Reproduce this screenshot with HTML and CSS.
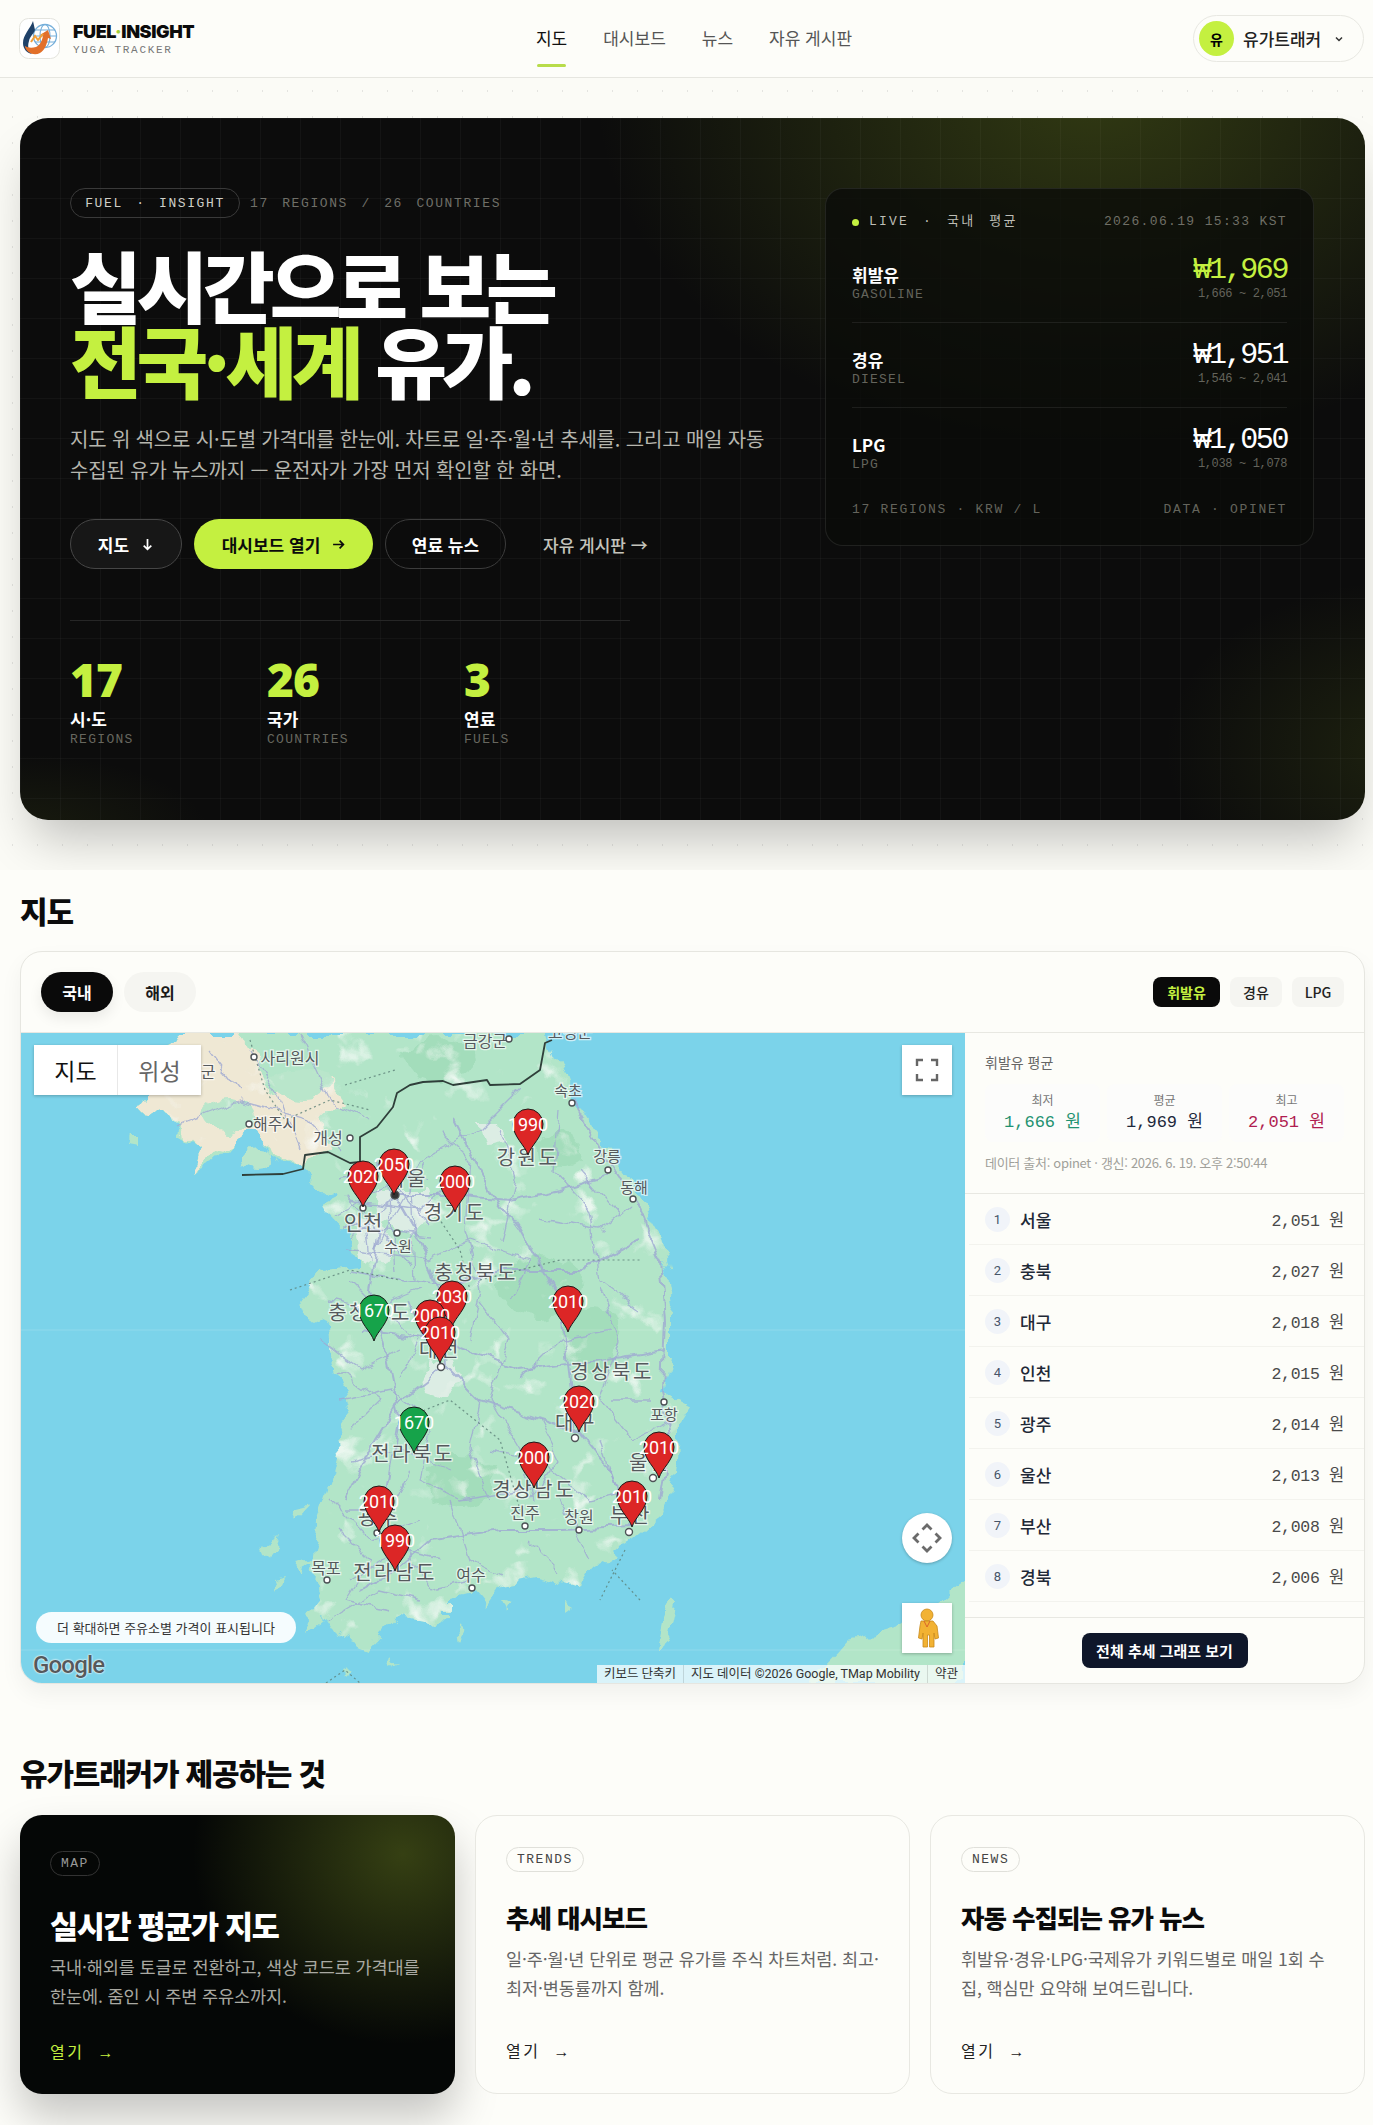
FILE: index.html
```html
<!DOCTYPE html>
<html lang="ko">
<head>
    <meta charset="UTF-8">
    <meta name="viewport" content="width=device-width, initial-scale=1.0">
    <title>FUEL·INSIGHT 유가트래커</title>
    <link rel="stylesheet" href="styles.css">
</head>
<body>
    <header class="topbar">
        <a class="brand" href="#">
            <svg class="brand-logo" viewBox="0 0 41 41" width="41" height="41">
                <rect x="0.5" y="0.5" width="40" height="40" rx="9" fill="#fff" stroke="#e4e4de"/>
                <circle cx="26" cy="18" r="11.5" fill="none" stroke="#74aeda" stroke-width="1.3"/>
                <ellipse cx="26" cy="18" rx="5" ry="11.5" fill="none" stroke="#74aeda" stroke-width="1.1"/>
                <path d="M14.5 18h23M16 12h20M16 24h20" fill="none" stroke="#74aeda" stroke-width="1.1"/>
                <path d="M14 3C11 11 4 17 4 25c0 6 4 10 9 11-3-3-5-7-3-13 1-5 4-6 6-11z" fill="#1f4168"/>
                <path d="M6 29c2 6 9 9 15 6 5-3 7-9 8-15l3 1-3-9-8 5 3 1c-1 5-3 9-7 11-4 1-8 1-11-1z" fill="#e2702a"/>
                <path d="M12 24l4-6 3 4 5-6" fill="none" stroke="#f2a13a" stroke-width="2"/>
            </svg>
            <span class="brand-text">
                <strong class="brand-name">FUEL<i class="brand-dot">·</i>INSIGHT</strong>
                <span class="brand-sub">YUGA TRACKER</span>
            </span>
        </a>
        <nav class="nav">
            <a class="nav-item active" href="#">지도</a>
            <a class="nav-item" href="#">대시보드</a>
            <a class="nav-item" href="#">뉴스</a>
            <a class="nav-item" href="#">자유 게시판</a>
        </nav>
        <button class="user-chip">
            <span class="avatar">유</span>
            <span class="user-name">유가트래커</span>
            <svg class="chevron" viewBox="0 0 10 10" width="10" height="10"><path d="M2 3.5l3 3 3-3" fill="none" stroke="#333" stroke-width="1.5"/></svg>
        </button>
    </header>

    <section class="hero-wrap">
        <div class="hero">
            <div class="hero-left">
                <div class="eyebrow">
                    <span class="eyebrow-pill">FUEL · INSIGHT</span>
                    <span class="eyebrow-note">17 REGIONS / 26 COUNTRIES</span>
                </div>
                <h1 class="hero-title">실시간으로 보는<br><em>전국·세계</em> 유가.</h1>
                <p class="hero-desc">지도 위 색으로 시·도별 가격대를 한눈에. 차트로 일·주·월·년 추세를. 그리고 매일 자동<br>수집된 유가 뉴스까지 — 운전자가 가장 먼저 확인할 한 화면.</p>
                <div class="hero-actions">
                    <a class="btn btn-dark" href="#">지도
                        <svg viewBox="0 0 12 12" width="13" height="13"><path d="M6 1v9.5M2.5 7L6 10.5 9.5 7" fill="none" stroke="currentColor" stroke-width="1.6"/></svg>
                    </a>
                    <a class="btn btn-lime" href="#">대시보드 열기
                        <svg viewBox="0 0 12 12" width="13" height="13"><path d="M1 6h9.5M7 2.5L10.5 6 7 9.5" fill="none" stroke="currentColor" stroke-width="1.6"/></svg>
                    </a>
                    <a class="btn btn-line" href="#">연료 뉴스</a>
                    <a class="btn-text" href="#">자유 게시판 →</a>
                </div>
                <div class="hero-stats">
                    <div class="stat"><b>17</b><span>시·도</span><small>REGIONS</small></div>
                    <div class="stat"><b>26</b><span>국가</span><small>COUNTRIES</small></div>
                    <div class="stat"><b>3</b><span>연료</span><small>FUELS</small></div>
                </div>
            </div>
            <aside class="live">
                <div class="live-head">
                    <span class="live-tag"><i class="live-dot"></i>LIVE · 국내 평균</span>
                    <span class="live-date">2026.06.19 15:33 KST</span>
                </div>
                <div class="live-row">
                    <div class="live-name"><b>휘발유</b><small>GASOLINE</small></div>
                    <div class="live-price lime"><b>₩1,969</b><small>1,666 ~ 2,051</small></div>
                </div>
                <div class="live-row">
                    <div class="live-name"><b>경유</b><small>DIESEL</small></div>
                    <div class="live-price"><b>₩1,951</b><small>1,546 ~ 2,041</small></div>
                </div>
                <div class="live-row">
                    <div class="live-name"><b>LPG</b><small>LPG</small></div>
                    <div class="live-price"><b>₩1,050</b><small>1,038 ~ 1,078</small></div>
                </div>
                <div class="live-foot"><span>17 REGIONS · KRW / L</span><span>DATA · OPINET</span></div>
            </aside>
        </div>
    </section>

    <section class="map-section">
        <h2 class="section-title">지도</h2>
        <div class="map-card">
            <div class="map-toolbar">
                <div class="tabs">
                    <button class="tab on">국내</button>
                    <button class="tab">해외</button>
                </div>
                <div class="fuels">
                    <button class="fuel on">휘발유</button>
                    <button class="fuel">경유</button>
                    <button class="fuel">LPG</button>
                </div>
            </div>
            <div class="map-body">
                <div class="map">
                    <svg class="map-svg" viewBox="21 1033 944 650" width="944" height="650">
                        <defs>
                            <path id="pin" d="M0 0C-3-10-15-18-15-31A15 15 0 1 1 15-31C15-18 3-10 0 0Z"/>
                            <clipPath id="landclip"><path d="M180 1033L165 1060 150 1090 135 1110 160 1113 180 1135 200 1150 193 1170 215 1160 233 1140 250 1127 262 1145 272 1155 300 1167 317 1183 333 1195 327 1207 330 1215 347 1233 350 1247 363 1257 363 1267 337 1270 320 1272 300 1300 307 1317 327 1327 330 1357 343 1390 350 1417 337 1437 340 1453 333 1483 321 1517 312 1560 321 1603 304 1623 299 1640 326 1617 339 1637 371 1650 402 1617 429 1623 446 1620 446 1597 473 1590 487 1607 504 1583 536 1577 558 1583 580 1590 594 1567 625 1547 661 1517 674 1483 677 1463 680 1443 680 1423 690 1407 663 1393 670 1360 670 1317 673 1300 660 1233 647 1210 627 1176 607 1146 590 1126 573 1100 560 1066 550 1040 548 1033Z"/></clipPath>
                            <filter id="mottle" x="0" y="0" width="100%" height="100%">
                                <feTurbulence type="fractalNoise" baseFrequency="0.03" numOctaves="3" seed="7"/>
                                <feColorMatrix values="0 0 0 0 0.95 0 0 0 0 0.97 0 0 0 0 0.95 5 0 0 0 -3.1"/>
                            </filter>
                            <filter id="rough" filterUnits="userSpaceOnUse" x="21" y="1033" width="944" height="650">
                                <feTurbulence type="fractalNoise" baseFrequency="0.045" numOctaves="3" seed="3" result="n"/>
                                <feDisplacementMap in="SourceGraphic" in2="n" scale="22" xChannelSelector="R" yChannelSelector="G"/>
                            </filter>
                            <filter id="wiggle" filterUnits="userSpaceOnUse" x="21" y="1033" width="944" height="650">
                                <feTurbulence type="fractalNoise" baseFrequency="0.06" numOctaves="2" seed="9" result="n"/>
                                <feDisplacementMap in="SourceGraphic" in2="n" scale="12" xChannelSelector="R" yChannelSelector="G"/>
                            </filter>
                        </defs>
                        <rect x="21" y="1033" width="944" height="650" fill="#7bd3ea"/>
                        <!-- land -->
                        <g filter="url(#rough)">
                            <path class="land" d="M180 1033L165 1060 150 1090 135 1110 160 1113 180 1135 200 1150 193 1170 215 1160 233 1140 250 1127 262 1145 272 1155 300 1167 317 1183 333 1195 327 1207 330 1215 347 1233 350 1247 363 1257 363 1267 337 1270 320 1272 300 1300 307 1317 327 1327 330 1357 343 1390 350 1417 337 1437 340 1453 333 1483 321 1517 312 1560 321 1603 304 1623 299 1640 326 1617 339 1637 371 1650 402 1617 429 1623 446 1620 446 1597 473 1590 487 1607 504 1583 536 1577 558 1583 580 1590 594 1567 625 1547 661 1517 674 1483 677 1463 680 1443 680 1423 690 1407 663 1393 670 1360 670 1317 673 1300 660 1233 647 1210 627 1176 607 1146 590 1126 573 1100 560 1066 550 1040 548 1033Z"/>
                            <path class="land" d="M965 1578L940 1600 905 1625 850 1640 810 1683 965 1683ZM656 1650L662 1620 672 1597 678 1602 672 1630 662 1650ZM310 1505L296 1520 292 1510ZM286 1575L278 1590 274 1578ZM276 1540L268 1562 262 1548ZM395 1655L400 1662 392 1666ZM345 1668L352 1672 346 1678ZM130 1135L140 1135 140 1145 128 1143ZM320 1560L300 1575 296 1565ZM500 1600L512 1604 504 1616ZM560 1600L570 1606 560 1614ZM455 1625L466 1630 458 1645Z"/>
                            <path class="beige" d="M180 1033L150 1090 135 1110 160 1113 200 1150 193 1170 233 1140 262 1145 300 1167 330 1150 322 1120 345 1100 330 1080 270 1095 255 1060 240 1033Z"/>
                            <ellipse class="green2" cx="228" cy="1115" rx="26" ry="16"/>
                            <ellipse class="green2" cx="300" cy="1085" rx="30" ry="14"/>
                            <ellipse class="green2" cx="258" cy="1160" rx="16" ry="10"/>
                            <ellipse class="green3" cx="440" cy="1060" rx="36" ry="22"/>
                            <ellipse class="green3" cx="540" cy="1285" rx="42" ry="30"/>
                            <ellipse class="green3" cx="560" cy="1150" rx="22" ry="18"/>
                            <ellipse class="green3" cx="460" cy="1480" rx="36" ry="26"/>
                            <ellipse class="green3" cx="590" cy="1340" rx="30" ry="34"/>
                            <rect x="21" y="1033" width="944" height="650" filter="url(#mottle)" clip-path="url(#landclip)" opacity="0.8"/>
                            <path class="pale" d="M352 1210l24 6 18 28-12 18-20-6-6-26zM430 1358l22 4 8 18-12 16-18-6-6-18zM376 1190l50 0 8 26-20 18-34-12zM477 1125l28 0 4 20-26 4z"/>
                        </g>
                        <!-- roads -->
                        <g filter="url(#wiggle)">
                            <g class="roads thick">
                                <path d="M394 1195L420 1240 440 1300 445 1365 480 1400 540 1420 579 1432 610 1470 632 1527"/>
                                <path d="M380 1230L370 1290 385 1350 400 1420 385 1500 379 1532 395 1571"/>
                                <path d="M394 1195L450 1195 510 1200 560 1190 607 1176"/>
                                <path d="M573 1100L600 1150 635 1200 660 1260 665 1320 662 1390 670 1440 660 1500"/>
                                <path d="M455 1120L490 1190 520 1230 560 1300 570 1380 575 1432"/>
                                <path d="M632 1527L560 1530 500 1530 430 1540 395 1571 360 1590"/>
                                <path d="M440 1290L500 1270 580 1270 640 1240"/>
                                <path d="M445 1365L400 1400 370 1450 345 1500"/>
                                <path d="M360 1330L440 1340 520 1370 600 1360 665 1350"/>
                            </g>
                            <g class="roads">
                                <path d="M340 1180L380 1170 430 1180M350 1200L420 1210 440 1190M345 1225L430 1235M360 1170L370 1260M385 1150L395 1270M410 1160L415 1280M345 1250L430 1260 470 1240M350 1270L440 1285M335 1215L400 1180 440 1150M372 1160L430 1225M345 1195L410 1265M425 1165L375 1250M350 1240L400 1190"/>
                                <path d="M440 1130L470 1160 465 1230 480 1290 470 1340M500 1130L515 1180 500 1240M560 1110L555 1170 590 1210 600 1280 640 1310M520 1090L480 1130 440 1150M540 1220L600 1230 630 1205M470 1240L530 1260 510 1300M580 1170L620 1215"/>
                                <path d="M330 1300L370 1310 420 1290M320 1340L360 1370 400 1350M340 1400L390 1390 430 1420 420 1480 460 1500 530 1490M350 1460L400 1450 450 1470M345 1510L390 1510 410 1470M350 1280L390 1320 420 1340 400 1380M340 1370L380 1400 350 1430M410 1300L430 1350"/>
                                <path d="M480 1300L510 1340 490 1400 520 1450 534 1500M600 1290L620 1340 600 1400 630 1440 672 1420M520 1380L560 1340 610 1330M490 1450L540 1460 590 1500 640 1490M450 1500L470 1560 500 1575M560 1500L590 1560M530 1540L560 1570M540 1420L560 1460 530 1500M610 1400L650 1400M480 1400L470 1450 490 1500M600 1440L620 1500"/>
                                <path d="M340 1530L370 1560 345 1600 390 1610M400 1540L430 1590 470 1580M330 1620L380 1590 420 1600M175 1125L240 1100 310 1120 340 1150M250 1050L280 1100 300 1150M300 1033L330 1100 370 1120M330 1500L370 1540 420 1520M350 1580L400 1550 440 1560M210 1050L240 1090"/>
                            </g>
                        </g>
                        <g class="roads dots">
                            <path d="M250 1040L265 1090 285 1120 330 1100 370 1110M345 1085L395 1070M430 1205L460 1250 470 1290M290 1290L350 1270 400 1280M480 1280L560 1260 640 1260M400 1420L450 1400 500 1440 520 1510M625 1550L600 1600M326 1683L345 1670 360 1683M640 1600L612 1570"/>
                        </g>
                        <path class="dmz" d="M242 1175L283 1174 303 1169 305 1155 328 1152 350 1163 360 1162 360 1137 377 1127 393 1107 397 1093 410 1085 423 1082 443 1081 453 1085 487 1080 490 1085 520 1084 540 1070 545 1043 552 1040"/>
                        <path class="seam" d="M21 1330H965M21 1650H965"/>
                        <!-- labels -->
                        <g class="places">
                            <text x="208" y="1078" class="md">군</text>
                            <text x="290" y="1064" class="md">사리원시</text>
                            <text x="275" y="1130" class="md">해주시</text>
                            <text x="328" y="1144" class="md">개성</text>
                            <text x="485" y="1047" class="md">금강군</text>
                            <text x="570" y="1038" class="md">고성군</text>
                            <text x="568" y="1096" class="sm">속초</text>
                            <text x="607" y="1162" class="sm">강릉</text>
                            <text x="634" y="1193" class="sm">동해</text>
                            <text x="528" y="1165" class="lg">강원도</text>
                            <text x="455" y="1220" class="lg">경기도</text>
                            <text x="363" y="1230" class="xl">인천</text>
                            <text x="407" y="1186" class="lg">서울</text>
                            <text x="398" y="1252" class="sm">수원</text>
                            <text x="476" y="1280" class="lg">충청북도</text>
                            <text x="370" y="1320" class="lg">충청남도</text>
                            <text x="440" y="1357" class="lg">대전</text>
                            <text x="612" y="1379" class="lg">경상북도</text>
                            <text x="576" y="1430" class="lg">대구</text>
                            <text x="664" y="1420" class="sm">포항</text>
                            <text x="413" y="1461" class="lg">전라북도</text>
                            <text x="650" y="1470" class="lg">울산</text>
                            <text x="534" y="1497" class="lg">경상남도</text>
                            <text x="525" y="1519" class="md">진주</text>
                            <text x="579" y="1523" class="md">창원</text>
                            <text x="631" y="1523" class="lg">부산</text>
                            <text x="379" y="1525" class="lg">광주</text>
                            <text x="326" y="1574" class="md">목포</text>
                            <text x="395" y="1580" class="lg">전라남도</text>
                            <text x="471" y="1581" class="md">여수</text>
                        </g>
                        <g class="city-dots">
                            <circle cx="254" cy="1057" r="3"/><circle cx="249" cy="1124" r="3"/><circle cx="350" cy="1138" r="3"/>
                            <circle cx="509" cy="1039" r="3"/><circle cx="572" cy="1103" r="3"/><circle cx="608" cy="1170" r="3"/>
                            <circle cx="633" cy="1199" r="3"/><circle cx="363" cy="1208" r="3"/><circle cx="397" cy="1233" r="3"/>
                            <circle cx="441" cy="1367" r="3.5"/><circle cx="664" cy="1402" r="3"/><circle cx="575" cy="1438" r="3.5"/>
                            <circle cx="653" cy="1478" r="3.5"/><circle cx="525" cy="1526" r="3"/><circle cx="579" cy="1530" r="3"/>
                            <circle cx="629" cy="1532" r="3.5"/><circle cx="377" cy="1533" r="3"/><circle cx="327" cy="1580" r="3"/><circle cx="472" cy="1588" r="3"/>
                            <circle cx="395" cy="1195" r="4" class="capital"/>
                        </g>
                        <!-- price pins -->
                        <g class="pin red" transform="translate(528 1155)"><use href="#pin"/><text y="-24">1990</text></g>
                        <g class="pin red" transform="translate(394 1195)"><use href="#pin"/><text y="-24">2050</text></g>
                        <g class="pin red" transform="translate(363 1207)"><use href="#pin"/><text y="-24">2020</text></g>
                        <g class="pin red" transform="translate(455 1212)"><use href="#pin"/><text y="-24">2000</text></g>
                        <g class="pin red" transform="translate(452 1327)"><use href="#pin"/><text y="-24">2030</text></g>
                        <g class="pin green" transform="translate(374 1341)"><use href="#pin"/><text y="-24">1670</text></g>
                        <g class="pin red" transform="translate(430 1346)"><use href="#pin"/><text y="-24">2000</text></g>
                        <g class="pin red" transform="translate(440 1363)"><use href="#pin"/><text y="-24">2010</text></g>
                        <g class="pin red" transform="translate(568 1332)"><use href="#pin"/><text y="-24">2010</text></g>
                        <g class="pin red" transform="translate(579 1432)"><use href="#pin"/><text y="-24">2020</text></g>
                        <g class="pin green" transform="translate(414 1453)"><use href="#pin"/><text y="-24">1670</text></g>
                        <g class="pin red" transform="translate(534 1488)"><use href="#pin"/><text y="-24">2000</text></g>
                        <g class="pin red" transform="translate(659 1478)"><use href="#pin"/><text y="-24">2010</text></g>
                        <g class="pin red" transform="translate(379 1532)"><use href="#pin"/><text y="-24">2010</text></g>
                        <g class="pin red" transform="translate(632 1527)"><use href="#pin"/><text y="-24">2010</text></g>
                        <g class="pin red" transform="translate(395 1571)"><use href="#pin"/><text y="-24">1990</text></g>
                    </svg>
                    <div class="map-type">
                        <span class="map-type-item on">지도</span>
                        <span class="map-type-item">위성</span>
                    </div>
                    <button class="map-ctl map-full">
                        <svg viewBox="0 0 24 24" width="24" height="24"><path d="M2 8V2h6M16 2h6v6M22 16v6h-6M8 22H2v-6" fill="none" stroke="#666" stroke-width="2.4"/></svg>
                    </button>
                    <button class="map-ctl map-pan">
                        <svg viewBox="0 0 30 30" width="30" height="30"><path d="M10.5 6.5L15 2l4.500 4.500M10.500 23.500L15 28l4.500-4.500M6.500 10.500L2 15l4.500 4.500M23.500 10.500L28 15l-4.500 4.500" fill="none" stroke="#6b6b6b" stroke-width="2.8"/></svg>
                    </button>
                    <button class="map-ctl map-peg">
                        <svg viewBox="0 0 24 40" width="24" height="40">
                            <circle cx="12" cy="7" r="6" fill="#f2b233" stroke="#c8891b" stroke-width="0.8"/>
                            <path d="M6 13h12l4 5 1.500 12-3.500 1-1-6v14h-4.500V27h-2v12H8V25l-1 6-3.500-1L5 18z" fill="#f2b233" stroke="#c8891b" stroke-width="0.8"/>
                            <path d="M9 13l3 6 3-6" fill="none" stroke="#d9662a" stroke-width="1"/>
                        </svg>
                    </button>
                    <div class="map-hint">더 확대하면 주유소별 가격이 표시됩니다</div>
                    <div class="map-google">Google</div>
                    <div class="map-attr">
                        <span>키보드 단축키</span>
                        <span>지도 데이터 ©2026 Google, TMap Mobility</span>
                        <span>약관</span>
                    </div>
                </div>
                <aside class="side">
                    <div class="side-top">
                        <div class="side-title">휘발유 평균</div>
                        <div class="side-stats">
                            <div class="side-stat"><span>최저</span><b class="low">1,666 원</b></div>
                            <div class="side-stat"><span>평균</span><b class="avg">1,969 원</b></div>
                            <div class="side-stat"><span>최고</span><b class="high">2,051 원</b></div>
                        </div>
                        <div class="side-src">데이터 출처: opinet · 갱신: 2026. 6. 19. 오후 2:50:44</div>
                    </div>
                    <ul class="rank">
                        <li><i>1</i><span>서울</span><b>2,051 원</b></li>
                        <li><i>2</i><span>충북</span><b>2,027 원</b></li>
                        <li><i>3</i><span>대구</span><b>2,018 원</b></li>
                        <li><i>4</i><span>인천</span><b>2,015 원</b></li>
                        <li><i>5</i><span>광주</span><b>2,014 원</b></li>
                        <li><i>6</i><span>울산</span><b>2,013 원</b></li>
                        <li><i>7</i><span>부산</span><b>2,008 원</b></li>
                        <li><i>8</i><span>경북</span><b>2,006 원</b></li>
                    </ul>
                    <div class="side-foot"><a class="side-btn" href="#">전체 추세 그래프 보기</a></div>
                </aside>
            </div>
        </div>
    </section>

    <section class="features">
        <h2 class="section-title">유가트래커가 제공하는 것</h2>
        <div class="feature-grid">
            <a class="feature dark" href="#">
                <span class="tag">MAP</span>
                <h3>실시간 평균가 지도</h3>
                <p>국내·해외를 토글로 전환하고, 색상 코드로 가격대를<br>한눈에. 줌인 시 주변 주유소까지.</p>
                <span class="open">열기 →</span>
            </a>
            <a class="feature" href="#">
                <span class="tag">TRENDS</span>
                <h3>추세 대시보드</h3>
                <p>일·주·월·년 단위로 평균 유가를 주식 차트처럼. 최고·<br>최저·변동률까지 함께.</p>
                <span class="open">열기 →</span>
            </a>
            <a class="feature" href="#">
                <span class="tag">NEWS</span>
                <h3>자동 수집되는 유가 뉴스</h3>
                <p>휘발유·경유·LPG·국제유가 키워드별로 매일 1회 수<br>집, 핵심만 요약해 보여드립니다.</p>
                <span class="open">열기 →</span>
            </a>
        </div>
    </section>
</body>
</html>
```

FILE: styles.css
```css
* {
    box-sizing: border-box;
}
body {
    margin: 0;
    background: #fdfdf9;
    color: #111;
    font-family: "Noto Sans CJK KR", "Noto Sans", sans-serif;
}
a {
    color: inherit;
    text-decoration: none;
}
button {
    font-family: inherit;
    border: 0;
    cursor: pointer;
}
h1, h2, h3, p, ul {
    margin: 0;
    padding: 0;
}

/* top bar */
.topbar {
    display: flex;
    align-items: center;
    justify-content: space-between;
    height: 78px;
    padding: 0 9px 0 19px;
    border-bottom: 1px solid #e6e6e0;
}
.brand {
    display: flex;
    align-items: center;
    gap: 13px;
    width: 176px;
}
.brand-logo {
    flex: none;
}
.brand-text {
    display: flex;
    flex-direction: column;
}
.brand-name {
    font-family: Inter, sans-serif;
    font-size: 18px;
    font-weight: 900;
    line-height: 21px;
    letter-spacing: -0.4px;
    color: #0b0b0b;
    white-space: nowrap;
}
.brand-dot {
    color: #a4cf3a;
    font-style: normal;
}
.brand-sub {
    margin-top: 2px;
    font-family: "Liberation Mono", monospace;
    font-size: 11px;
    line-height: 13px;
    letter-spacing: 1.7px;
    color: #777;
}
.nav {
    display: flex;
    gap: 36px;
    align-self: stretch;
}
.nav-item {
    position: relative;
    display: flex;
    align-items: center;
    padding-bottom: 2px;
    font-size: 17px;
    color: #555;
}
.nav-item.active {
    color: #111;
}
.nav-item.active::after {
    content: "";
    position: absolute;
    left: 1px;
    right: 1px;
    top: 64px;
    height: 3px;
    border-radius: 2px;
    background: #b8dc4a;
}
.user-chip {
    display: flex;
    align-items: center;
    width: 171px;
    height: 47px;
    padding: 0 5px;
    border: 1px solid #e8e8e2;
    border-radius: 24px;
    background: #fdfdf9;
}
.avatar {
    display: flex;
    align-items: center;
    justify-content: center;
    width: 35px;
    height: 35px;
    border-radius: 50%;
    background: #c4f040;
    font-size: 14px;
    font-weight: 700;
}
.user-name {
    margin-left: 9px;
    font-size: 17px;
    font-weight: 500;
    color: #222;
}
.chevron {
    margin-left: 13px;
}

/* hero */
.hero-wrap {
    padding: 40px 8px 50px 20px;
    background-color: #fbfbf6;
    background-image: radial-gradient(circle, rgba(0, 0, 0, 0.09) 0.8px, transparent 1px);
    background-size: 25px 26px;
}
.hero {
    display: flex;
    justify-content: space-between;
    height: 702px;
    padding: 70px 51px 0 50px;
    border-radius: 28px;
    color: #fff;
    background-color: #0c0c0c;
    background-image:
        linear-gradient(rgba(255, 255, 255, 0.03) 1px, transparent 1px),
        linear-gradient(90deg, rgba(255, 255, 255, 0.03) 1px, transparent 1px),
        radial-gradient(ellipse 500px 360px at 80% -4%, rgba(100, 120, 28, 0.42), transparent 100%),
        radial-gradient(ellipse 240px 170px at 103% 90%, rgba(100, 120, 28, 0.2), transparent 100%),
        radial-gradient(ellipse 190px 80px at 0% 102%, rgba(100, 120, 28, 0.14), transparent 100%);
    background-size: 40px 40px, 40px 40px, auto, auto, auto;
    box-shadow: 0 30px 50px -12px rgba(0, 0, 0, 0.24);
}
.hero-left {
    width: 700px;
}
.eyebrow {
    display: flex;
    align-items: center;
    gap: 10px;
    font-family: "Liberation Mono", monospace;
    font-size: 13px;
    letter-spacing: 1.6px;
    word-spacing: 4px;
}
.eyebrow-pill {
    display: flex;
    align-items: center;
    justify-content: center;
    width: 170px;
    height: 30px;
    border: 1px solid #3a3a3a;
    border-radius: 15px;
    color: #cfcfc8;
}
.eyebrow-note {
    color: #6f6f68;
}
.hero-title {
    margin-top: 29px;
    font-size: 78px;
    font-weight: 800;
    line-height: 75px;
    letter-spacing: -5.2px;
}
.hero-title em {
    font-style: normal;
    color: #c4f040;
}
.hero-desc {
    margin-top: 26px;
    font-size: 20px;
    line-height: 31px;
    letter-spacing: -0.16px;
    color: #b6b6ae;
    white-space: nowrap;
}
.hero-actions {
    display: flex;
    align-items: center;
    gap: 12px;
    margin-top: 34px;
}
.btn {
    display: flex;
    align-items: center;
    justify-content: center;
    gap: 12px;
    height: 50px;
    border-radius: 25px;
    font-size: 17px;
    font-weight: 700;
}
.btn-dark {
    width: 112px;
    border: 1px solid #464646;
    background: #171717;
}
.btn-lime {
    width: 179px;
    background: #c4f040;
    color: #0b0b0b;
}
.btn-line {
    width: 121px;
    border: 1px solid #3c3c3c;
}
.btn-text {
    margin-left: 25px;
    font-size: 17px;
    font-weight: 500;
    color: #c4c4bc;
}
.hero-stats {
    display: grid;
    grid-template-columns: repeat(3, 197px);
    width: 560px;
    margin-top: 51px;
    padding-top: 33px;
    border-top: 1px solid #262626;
}
.stat {
    display: flex;
    flex-direction: column;
}
.stat b {
    font-family: "Open Sans", sans-serif;
    font-size: 46px;
    font-weight: 800;
    line-height: 50px;
    letter-spacing: -1px;
    color: #c4f040;
}
.stat span {
    margin-top: 3px;
    font-size: 17px;
    font-weight: 700;
    line-height: 24px;
}
.stat small {
    margin-top: 2px;
    font-family: "Liberation Mono", monospace;
    font-size: 13px;
    line-height: 14px;
    letter-spacing: 1.3px;
    color: #67675f;
}

/* live card */
.live {
    display: flex;
    flex-direction: column;
    width: 489px;
    height: 358px;
    padding: 24px 26px 0;
    border: 1px solid rgba(255, 255, 255, 0.09);
    border-radius: 18px;
    background: rgba(10, 11, 9, 0.78);
}
.live-head, .live-foot {
    display: flex;
    justify-content: space-between;
    font-family: "Liberation Mono", "Noto Sans CJK KR", monospace;
    font-size: 13px;
    line-height: 18px;
    letter-spacing: 1.35px;
    color: #85857c;
}
.live-head {
    margin-bottom: 7px;
}
.live-tag {
    display: flex;
    align-items: center;
    letter-spacing: 2.2px;
    word-spacing: 4px;
    color: #bdbdb5;
}
.live-dot {
    width: 7px;
    height: 7px;
    margin-right: 10px;
    border-radius: 50%;
    background: #c4f040;
}
.live-date {
    color: #6f6f66;
}
.live-row {
    display: flex;
    justify-content: space-between;
    align-items: flex-start;
    height: 85px;
    padding-top: 16px;
    border-bottom: 1px solid rgba(255, 255, 255, 0.08);
}
.live-row:nth-of-type(4) {
    border-bottom: 0;
}
.live-name {
    display: flex;
    flex-direction: column;
    padding-top: 9px;
}
.live-name b {
    font-size: 17px;
    line-height: 24px;
}
.live-name small {
    font-family: "Liberation Mono", monospace;
    font-size: 13px;
    line-height: 15px;
    letter-spacing: 1.2px;
    color: #64645c;
}
.live-price {
    display: flex;
    flex-direction: column;
    align-items: flex-end;
}
.live-price b {
    font-family: "Liberation Mono", monospace;
    font-size: 30px;
    font-weight: 400;
    line-height: 33px;
    letter-spacing: -2.4px;
}
.live-price.lime b {
    color: #c4f040;
}
.live-price small {
    font-family: "Liberation Mono", monospace;
    font-size: 12px;
    line-height: 15px;
    letter-spacing: -0.35px;
    color: #64645c;
}
.live-foot {
    margin-top: 8px;
    letter-spacing: 1.7px;
    color: #64645c;
}

/* map section */
.map-section {
    position: relative;
    padding: 20px 8px 0 20px;
    background: #fdfdf9;
}
.section-title {
    font-size: 30px;
    font-weight: 800;
    line-height: 40px;
    letter-spacing: -1.2px;
    color: #0b0b0b;
}
.map-card {
    margin-top: 21px;
    border: 1px solid #e6e6e0;
    border-radius: 22px;
    overflow: hidden;
    background: #fdfdf9;
    box-shadow: 0 10px 22px rgba(0, 0, 0, 0.05);
}
.map-toolbar {
    display: flex;
    align-items: center;
    justify-content: space-between;
    height: 81px;
    padding: 0 20px;
    border-bottom: 1px solid #e8e8e2;
}
.tabs, .fuels {
    display: flex;
}
.tabs {
    gap: 11px;
}
.fuels {
    gap: 10px;
}
.tab {
    width: 72px;
    height: 40px;
    border-radius: 20px;
    background: #f5f5f1;
    font-size: 16px;
    font-weight: 700;
    color: #1a1a1a;
}
.tab.on {
    background: #0a0a0a;
    color: #fff;
    box-shadow: 0 6px 14px rgba(0, 0, 0, 0.08);
}
.fuel {
    height: 30px;
    min-width: 52px;
    padding: 0 12px;
    border-radius: 8px;
    background: #f5f5f1;
    font-size: 14px;
    font-weight: 500;
    color: #222;
}
.fuel.on {
    width: 67px;
    background: #0a0a0a;
    color: #c4f040;
    font-weight: 700;
}
.map-body {
    display: flex;
    height: 650px;
}
.map {
    position: relative;
    flex: none;
    width: 944px;
    height: 650px;
    overflow: hidden;
}
.map-svg {
    display: block;
}
.land {
    fill: #b2e5c8;
}
.beige {
    fill: #efe8d4;
    clip-path: url(#landclip);
}
.green2 {
    fill: #b9e6cb;
}
.green3 {
    fill: #a3ddbb;
}
.pale {
    fill: #eef1f0;
    opacity: 0.7;
}
.roads {
    fill: none;
    stroke: #9fa9d2;
    stroke-width: 1.3;
    stroke-linejoin: round;
    opacity: 0.8;
}
.roads.thick {
    stroke-width: 2;
}
.roads.dots {
    stroke: #5b7f77;
    stroke-width: 1.2;
    stroke-dasharray: 2 3;
}
.dmz {
    fill: none;
    stroke: #2f3f3a;
    stroke-width: 1.8;
    stroke-linejoin: round;
}
.seam {
    stroke: rgba(255, 255, 255, 0.16);
    stroke-width: 1;
}
.places text {
    font-family: "Noto Sans CJK KR", sans-serif;
    text-anchor: middle;
    fill: #55595c;
    stroke: rgba(255, 255, 255, 0.65);
    stroke-width: 2.5px;
    paint-order: stroke;
}
.places .sm {
    font-size: 15px;
}
.places .md {
    font-size: 16px;
}
.places .lg {
    font-size: 20px;
    letter-spacing: 2.5px;
}
.places .xl {
    font-size: 21px;
}
.city-dots circle {
    fill: #fff;
    stroke: #4d5256;
    stroke-width: 1.4;
}
.city-dots .capital {
    fill: #333;
}
.pin use {
    stroke: #1b1b1b;
    stroke-width: 1;
}
.pin.red use {
    fill: #dc2626;
}
.pin.green use {
    fill: #16a34a;
}
.pin text {
    font-family: Roboto, sans-serif;
    font-size: 18px;
    text-anchor: middle;
    fill: #fff;
}
.map-type {
    position: absolute;
    left: 13px;
    top: 12px;
    display: flex;
    width: 167px;
    height: 50px;
    background: #fff;
    box-shadow: 0 1px 3px rgba(0, 0, 0, 0.25);
}
.map-type-item {
    flex: 1;
    display: flex;
    align-items: center;
    justify-content: center;
    font-size: 23px;
    color: #666;
}
.map-type-item.on {
    color: #111;
    border-right: 1px solid #e8e8e8;
}
.map-ctl {
    position: absolute;
    right: 13px;
    display: flex;
    align-items: center;
    justify-content: center;
    width: 50px;
    height: 50px;
    padding: 0;
    background: #fff;
    box-shadow: 0 1px 3px rgba(0, 0, 0, 0.25);
}
.map-full {
    top: 12px;
}
.map-pan {
    top: 480px;
    border-radius: 50%;
}
.map-peg {
    top: 570px;
}
.map-hint {
    position: absolute;
    left: 15px;
    top: 579px;
    width: 260px;
    height: 31px;
    border-radius: 16px;
    background: rgba(255, 255, 255, 0.92);
    font-size: 13px;
    line-height: 31px;
    text-align: center;
    color: #333;
}
.map-google {
    position: absolute;
    left: 12px;
    top: 617px;
    font-family: Roboto, sans-serif;
    font-size: 24px;
    font-weight: 500;
    line-height: 30px;
    letter-spacing: -0.8px;
    color: #55595c;
    text-shadow: 0 0 2px #fff, 0 0 2px #fff;
}
.map-attr {
    position: absolute;
    right: 0;
    bottom: 0;
    display: flex;
    height: 18px;
    background: rgba(255, 255, 255, 0.72);
    font-family: Roboto, "Noto Sans CJK KR", sans-serif;
    font-size: 12.5px;
    line-height: 18px;
    color: #333;
}
.map-attr span {
    padding: 0 7px;
    border-right: 1px solid rgba(0, 0, 0, 0.12);
}
.map-attr span:last-child {
    border-right: 0;
}

/* side list */
.side {
    flex: 1;
    display: flex;
    flex-direction: column;
}
.side-top {
    height: 161px;
    padding: 19px 20px 0;
    border-bottom: 1px solid #e8e8e2;
}
.side-title {
    font-size: 14px;
    line-height: 20px;
    color: #666;
}
.side-stats {
    display: grid;
    grid-template-columns: repeat(3, 1fr);
    gap: 7px;
    margin-top: 12px;
}
.side-stat {
    display: flex;
    flex-direction: column;
    align-items: center;
    height: 58px;
    padding-top: 7px;
    border-radius: 8px;
    background: #fcfcfb;
}
.side-stat span {
    font-size: 12px;
    line-height: 18px;
    color: #777;
}
.side-stat b {
    margin-top: 3px;
    font-family: "Liberation Mono", "Noto Sans CJK KR", monospace;
    font-size: 17px;
    font-weight: 400;
    line-height: 22px;
}
.low {
    color: #1f9270;
}
.avg {
    color: #1e293b;
}
.high {
    color: #b01c50;
}
.side-src {
    margin-top: 11px;
    font-size: 13px;
    line-height: 20px;
    letter-spacing: -0.3px;
    color: #a0a09a;
    white-space: nowrap;
}
.rank {
    list-style: none;
    height: 423px;
}
.rank li {
    display: flex;
    align-items: center;
    height: 51px;
    margin-left: 4px;
    padding: 0 20px 0 16px;
    border-bottom: 1px solid #f3f3ee;
}
.rank i {
    display: flex;
    align-items: center;
    justify-content: center;
    width: 25px;
    height: 25px;
    border-radius: 50%;
    background: #f1f4f9;
    font-family: Roboto, sans-serif;
    font-size: 13px;
    font-style: normal;
    color: #475569;
}
.rank span {
    margin-left: 10px;
    font-size: 17px;
    font-weight: 500;
    color: #1f2937;
}
.rank b {
    margin-left: auto;
    font-family: "Liberation Mono", "Noto Sans CJK KR", monospace;
    font-size: 16.5px;
    font-weight: 400;
    letter-spacing: -0.3px;
    color: #4a4a4a;
}
.side-foot {
    flex: 1;
    display: flex;
    justify-content: center;
    padding-top: 15px;
    border-top: 1px solid #e8e8e2;
}
.side-btn {
    display: flex;
    align-items: center;
    justify-content: center;
    width: 166px;
    height: 35px;
    border-radius: 8px;
    background: #0f172a;
    font-size: 15px;
    font-weight: 700;
    color: #fff;
}

/* feature cards */
.features {
    padding: 68px 8px 32px 20px;
}
.feature-grid {
    display: grid;
    grid-template-columns: repeat(3, 1fr);
    gap: 20px;
    margin-top: 23px;
}
.feature {
    display: flex;
    flex-direction: column;
    align-items: flex-start;
    height: 279px;
    padding: 31px 30px 30px;
    border: 1px solid #e8e8e2;
    border-radius: 22px;
    background: #fdfdf9;
}
.feature.dark {
    padding: 36px 30px 30px;
    border: 0;
    color: #fff;
    background-color: #050706;
    background-image: radial-gradient(ellipse 210px 190px at 88% 14%, rgba(86, 102, 28, 0.6), transparent 100%);
    box-shadow: 0 24px 44px rgba(0, 0, 0, 0.22);
}
.tag {
    display: flex;
    align-items: center;
    height: 25px;
    padding: 0 10px;
    border: 1px solid #e0e0da;
    border-radius: 13px;
    font-family: "Liberation Mono", monospace;
    font-size: 13px;
    letter-spacing: 1.5px;
    color: #444;
}
.dark .tag {
    border-color: #333;
    color: #999;
}
.feature h3 {
    margin-top: 25px;
    font-size: 25.5px;
    font-weight: 800;
    line-height: 40px;
    letter-spacing: -1px;
    color: #0b0b0b;
}
.dark h3 {
    margin-top: 29px;
    font-size: 30.5px;
    color: #fff;
    letter-spacing: -1.3px;
}
.feature p {
    margin-top: 8px;
    font-size: 17.5px;
    line-height: 28.5px;
    letter-spacing: -0.1px;
    color: #666;
    white-space: nowrap;
}
.dark p {
    color: #a9a9a2;
}
.open {
    margin-top: auto;
    font-family: "Liberation Mono", "Noto Sans CJK KR", monospace;
    font-size: 16px;
    line-height: 20px;
    letter-spacing: 2.5px;
    word-spacing: 4px;
    color: #222;
}
.dark .open {
    color: #c4f040;
}
```
